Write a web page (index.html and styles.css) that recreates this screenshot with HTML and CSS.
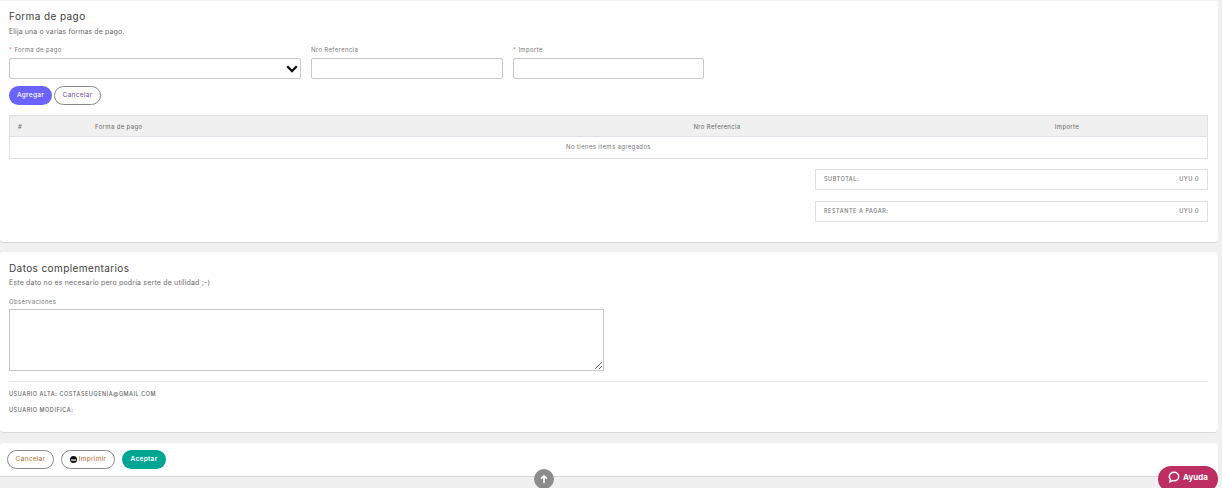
FILE: index.html
```html
<!DOCTYPE html>
<html lang="es">
<head>
<meta charset="utf-8">
<title>Forma de pago</title>
<link rel="stylesheet" href="styles.css">
</head>
<body>
<main class="page">
  <section class="card card-pay">
    <h2 class="title">Forma de pago</h2>
    <p class="sub">Elija una o varias formas de pago.</p>
    <div class="fields">
      <div class="field f-select">
        <label class="lbl"><span class="req">*</span> Forma de pago</label>
        <div class="input select-box">
          <svg class="chev" width="12" height="8" viewBox="0 0 12 8"><path d="M1.200 1.200 6 6l4.800-4.800" fill="none" stroke="#111" stroke-width="2.300"/></svg>
        </div>
      </div>
      <div class="field f-ref">
        <label class="lbl">Nro Referencia</label>
        <div class="input"></div>
      </div>
      <div class="field f-imp">
        <label class="lbl"><span class="req">*</span> Importe</label>
        <div class="input"></div>
      </div>
    </div>
    <div class="actions">
      <button class="btn btn-primary">Agregar</button>
      <button class="btn btn-outline txt-purple">Cancelar</button>
    </div>
    <div class="table">
      <div class="thead">
        <span>#</span>
        <span>Forma de pago</span>
        <span class="center">Nro Referencia</span>
        <span class="center">Importe</span>
      </div>
      <div class="tempty">No tienes items agregados</div>
    </div>
    <div class="totals">
      <div class="total"><span>SUBTOTAL:</span><span>UYU 0</span></div>
      <div class="total"><span>RESTANTE A PAGAR:</span><span>UYU 0</span></div>
    </div>
  </section>

  <section class="card card-extra">
    <h2 class="title">Datos complementarios</h2>
    <p class="sub sub-extra">Este dato no es necesario pero podría serte de utilidad ;-)</p>
    <label class="lbl lbl-obs">Observaciones</label>
    <textarea class="obs"></textarea>
    <hr class="rule">
    <p class="audit">USUARIO ALTA: COSTASEUGENIA@GMAIL.COM</p>
    <p class="audit">USUARIO MODIFICA:</p>
  </section>

  <section class="card card-foot">
    <button class="btn btn-outline btn-foot txt-orange">Cancelar</button>
    <button class="btn btn-outline btn-print txt-orange">
      <svg width="7" height="7" viewBox="0 0 7 7"><circle cx="3.500" cy="3.500" r="3.500" fill="#111"/><rect x="1" y="3.400" width="5" height="1.300" fill="#eee"/></svg>
      Imprimir
    </button>
    <button class="btn btn-green">Aceptar</button>
  </section>
</main>

<button class="to-top" aria-label="Subir">
  <svg width="10" height="10" viewBox="0 0 10 10"><path d="M5 9V2M2 4.800 5 1.800l3 3" fill="none" stroke="#fff" stroke-width="1.600"/></svg>
</button>
<button class="help">
  <svg width="12" height="12" viewBox="0 0 14 14"><path d="M7 1.500c3.100 0 5.500 2.200 5.500 5s-2.400 5-5.500 5c-.7 0-1.400-.1-2-.3L2.300 12.600l.5-2.800C2 8.900 1.500 7.800 1.500 6.500c0-2.800 2.400-5 5.500-5z" fill="none" stroke="#fff" stroke-width="1.700"/></svg>
  Ayuda
</button>
</body>
</html>
```
FILE: styles.css
```css
* { box-sizing: border-box; }
html, body { margin: 0; height: 100%; }
body {
  background: #f0f0f0;
  font-family: Inter, "Open Sans", sans-serif;
  color: #666;
  overflow: hidden;
  position: relative;
}
.page { width: 1218px; padding-top: 1px; }
.card {
  background: #fff;
  border-bottom: 1px solid #d8d8d8;
  border-radius: 0 0 4px 4px;
  padding: 0 10px 0 9px;
}
.card-pay { height: 242px; padding-top: 9px; }
.card-extra { height: 181px; margin-top: 9px; padding-top: 10px; border-radius: 4px; }
.card-foot {
  height: 34px;
  margin-top: 10px;
  padding: 7px 7px 0;
  display: flex;
  gap: 7px;
  align-items: flex-start;
  border-radius: 4px 4px 0 0;
}
.title { margin: 0; font-size: 10px; line-height: 13px; font-weight: 400; color: #3d3d3d; letter-spacing: .4px; }
.sub { margin: 4px 0 0; font-size: 7px; line-height: 10px; color: #6a6a6a; letter-spacing: .11px; }
.sub-extra { margin-top: 3px; letter-spacing: .18px; }
.fields { display: flex; gap: 10px; margin-top: 8px; }
.field { display: flex; flex-direction: column; }
.f-select { width: 292px; }
.f-ref { width: 192px; }
.f-imp { width: 191px; }
.lbl { font-size: 6px; line-height: 10px; color: #777; letter-spacing: .35px; display: block; }
.req { color: #f06a9b; }
.input {
  height: 21px;
  margin-top: 3px;
  border: 1px solid #c8c8c8;
  border-radius: 2px;
  background: #fff;
}
.select-box { display: flex; align-items: center; justify-content: flex-end; padding-right: 1px; }
.chev { margin-right: 1px; }
.actions { display: flex; gap: 2px; margin-top: 7px; }
.btn {
  font-family: inherit;
  font-size: 6.500px;
  height: 19px;
  border-radius: 10px;
  padding: 0;
  line-height: 1;
  letter-spacing: .3px;
  display: inline-flex;
  align-items: center;
  justify-content: center;
  gap: 2px;
}
.btn-primary { width: 43px; background: #6c63ff; color: #fff; border: 0; font-weight: 500; }
.btn-outline { width: 47px; background: #fff; border: 1px solid #888; }
.btn-foot { width: 47px; }
.btn-print { width: 54px; }
.btn-green { width: 44px; background: #00a693; color: #fff; border: 0; font-weight: 600; }
.txt-purple { color: #6b4fa0; }
.txt-orange { color: #b3702c; }
.table { margin-top: 10px; border: 1px solid #dde1e6; }
.thead {
  display: grid;
  grid-template-columns: 77px 412px 420px 1fr;
  height: 21px;
  padding-left: 8px;
  align-items: center;
  background: #f0f0f0;
  border-bottom: 1px solid #dde1e6;
  font-size: 6px;
  color: #666;
  letter-spacing: .35px;
}
.center { text-align: center; }
.tempty { height: 21px; line-height: 20px; text-align: center; font-size: 6px; color: #777; letter-spacing: .36px; }
.totals { margin: 10px 0 0 806px; display: flex; flex-direction: column; gap: 11px; }
.total {
  height: 21px;
  padding: 0 8px 2px;
  border: 1px solid #dde1e6;
  display: flex;
  align-items: center;
  justify-content: space-between;
  font-size: 5.500px;
  font-weight: 500;
  color: #777;
  letter-spacing: .55px;
}
.lbl-obs { margin-top: 9px; }
.obs {
  display: block;
  width: 595px;
  height: 62px;
  margin: 2px 0 0;
  border: 1px solid #c8c8c8;
  border-radius: 0;
  background: #fff;
}
.rule { margin: 10px 0 0; border: 0; border-top: 1px solid #e6e6ea; }
.audit { margin: 1px 0 0; font-size: 5.500px; line-height: 15px; color: #666; letter-spacing: .54px; font-weight: 500; }
.rule + .audit { margin-top: 5px; }
.to-top {
  position: absolute;
  left: 534px;
  top: 469px;
  width: 20px;
  height: 20px;
  padding: 0;
  border: 0;
  border-radius: 50%;
  background: #8c8c8c;
  display: flex;
  align-items: center;
  justify-content: center;
}
.help {
  position: absolute;
  left: 1158px;
  top: 466px;
  width: 60px;
  height: 26px;
  padding: 0 0 4px;
  border: 0;
  border-radius: 13px;
  background: #bd2e62;
  color: #fff;
  font-family: inherit;
  font-size: 8px;
  font-weight: 700;
  display: flex;
  align-items: center;
  justify-content: center;
  gap: 3px;
}
```
